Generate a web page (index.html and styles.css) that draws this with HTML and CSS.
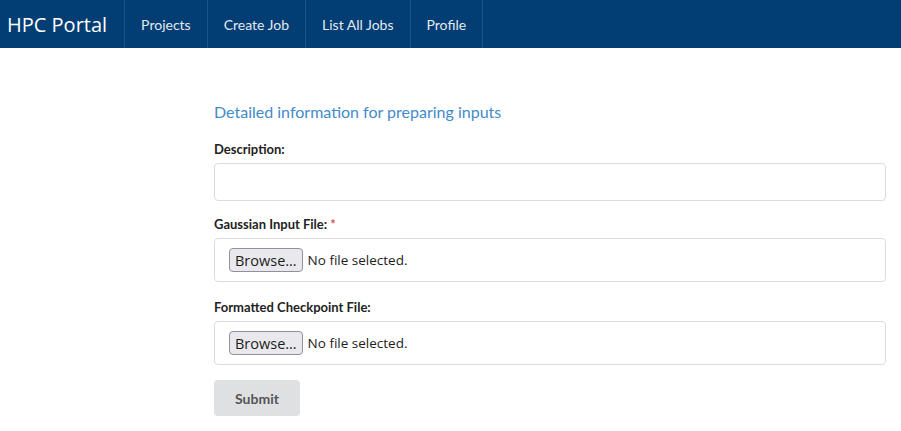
FILE: index.html
```
<!DOCTYPE html>
<html>
<head>
<meta charset="utf-8">
<link rel="stylesheet" href="styles.css">
</head>
<body>
<nav class="navbar">
  <a class="brand">HPC Portal</a>
  <ul class="nav">
    <li><a>Projects</a></li>
    <li><a>Create Job</a></li>
    <li><a>List All Jobs</a></li>
    <li><a>Profile</a></li>
  </ul>
</nav>
<main class="content">
  <h2 class="title">Detailed information for preparing inputs</h2>
  <form class="form">
    <div class="group">
      <label class="label">Description:</label>
      <div class="control"></div>
    </div>
    <div class="group">
      <label class="label">Gaussian Input File: <span class="req">*</span></label>
      <div class="control file"><span class="browse">Browse…</span><span class="nofile">No file selected.</span></div>
    </div>
    <div class="group group-last">
      <label class="label">Formatted Checkpoint File:</label>
      <div class="control file"><span class="browse">Browse…</span><span class="nofile">No file selected.</span></div>
    </div>
    <div class="actions"><span class="submit">Submit</span></div>
  </form>
</main>
</body>
</html>
```
FILE: styles.css
```
* { box-sizing: border-box; }
body { margin: 0; font-family: Lato, "Liberation Sans", sans-serif; color: #222; background: #fff; }
.navbar { display: flex; align-items: stretch; height: 48px; background: #023d74; }
.brand { display: flex; align-items: center; padding: 0 17px 0 7px; font-size: 20px; color: #fff; font-family: "Open Sans", Lato, sans-serif; border-right: 1px solid #1b5287; }
.nav { display: flex; margin: 0; padding: 0; list-style: none; }
.nav li { display: flex; border-right: 1px solid #1b5287; }
.nav a { display: flex; align-items: center; padding: 0 16px; font-size: 14px; color: #e3e9f0; }
.content { padding: 54px 15px 0 214px; }
.title { margin: 0 0 19px; font-size: 16px; font-weight: 400; color: #428bca; line-height: 20px; }
.group { margin-bottom: 17px; }
.group:first-child { margin-bottom: 15px; }
.group-last { margin-bottom: 15px; }
.label { display: block; font-size: 13px; font-weight: 700; margin-bottom: 6px; line-height: 16px; }
.req { color: #d9534f; }
.control { height: 38px; border: 1px solid #dcdcdc; border-radius: 4px; }
.file { height: 44px; display: flex; align-items: center; padding-left: 14px; font-family: "Open Sans", sans-serif; font-size: 13.5px; color: #1c1c1c; }
.browse { display: inline-flex; align-items: center; height: 24px; padding: 0 5px; background: #e9e9ed; border: 1px solid #8f8f9d; border-radius: 4px; margin-right: 5px; font-size: 14.5px; }
.actions { margin-top: 0; }
.submit { display: inline-flex; align-items: center; justify-content: center; width: 86px; height: 36px; background: #dfe0e2; border-radius: 4px; color: #555; font-weight: 700; font-size: 14px; }
```
